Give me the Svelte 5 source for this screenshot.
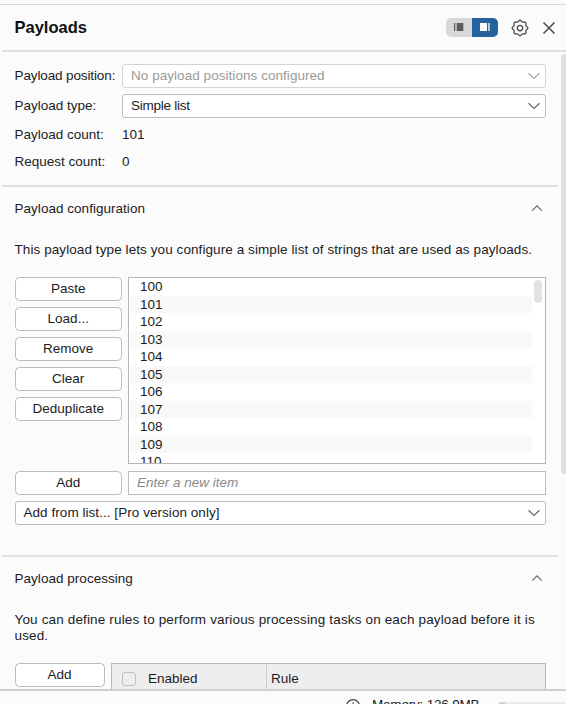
<script>
  const items = Array.from({ length: 11 }, (_, i) => 100 + i);
  const actions = ['Paste', 'Load...', 'Remove', 'Clear', 'Deduplicate'];
</script>

{#snippet chevron(up)}
  <svg class="chevron" width="14" height="10" viewBox="0 0 14 10">
    {#if up}
      <path d="M2.2 7.6 L7 2.8 L11.8 7.6" />
    {:else}
      <path d="M1.5 2.2 L7 7.4 L12.5 2.2" />
    {/if}
  </svg>
{/snippet}

<div class="app">
  <header>
    <h1>Payloads</h1>
    <div class="toggle">
      <span class="side">
        <svg width="12" height="10" viewBox="0 0 12 10"><path d="M1 1h1.3v8H1zM3.7 1h6.6v8H3.7z" /></svg>
      </span>
      <span class="side on">
        <svg width="12" height="10" viewBox="0 0 12 10"><path d="M1 1h7v8H1zM9.3 1h1.3v8H9.3z" /></svg>
      </span>
    </div>
    <svg class="gear" width="18" height="18" viewBox="0 0 18 18">
      <path d="M9 1.2 C10.5 1.2 10.4 2.9 11.5 3.2 C12.6 3.3 13.5 2.3 14.5 3.5 C15.7 4.5 14.7 5.4 14.8 6.5 C15.1 7.6 16.8 7.5 16.8 9 C16.8 10.5 15.1 10.4 14.8 11.5 C14.7 12.6 15.7 13.5 14.5 14.5 C13.5 15.7 12.6 14.7 11.5 14.8 C10.4 15.1 10.5 16.8 9 16.8 C7.5 16.8 7.6 15.1 6.5 14.8 C5.4 14.7 4.5 15.7 3.5 14.5 C2.3 13.5 3.3 12.6 3.2 11.5 C2.9 10.4 1.2 10.5 1.2 9 C1.2 7.5 2.9 7.6 3.2 6.5 C3.3 5.4 2.3 4.5 3.5 3.5 C4.5 2.3 5.4 3.3 6.5 3.2 C7.6 2.9 7.5 1.2 9 1.2 Z" />
      <circle cx="9" cy="9" r="2.7" />
    </svg>
    <svg class="close" width="14" height="14" viewBox="0 0 14 14"><path d="M1.5 1.5 L12.5 12.5 M12.5 1.5 L1.5 12.5" /></svg>
  </header>
  <hr />

  <main>
    <div class="content">
      <section class="fields">
        <div class="field"><span class="tight">Payload position:</span><div class="select disabled">No payload positions configured{@render chevron(false)}</div></div>
        <div class="field"><span>Payload type:</span><div class="select tight">Simple list{@render chevron(false)}</div></div>
        <div class="field count"><span>Payload count:</span><b>101</b></div>
        <div class="field count"><span>Request count:</span><b>0</b></div>
      </section>

      <section class="config">
        <div class="title"><span>Payload configuration</span>{@render chevron(true)}</div>
        <p>This payload type lets you configure a simple list of strings that are used as payloads.</p>
        <div class="editor">
          <div class="buttons">
            {#each actions as action}
              <button>{action}</button>
            {/each}
          </div>
          <div class="list">
            <div class="rows">
              {#each items as item}
                <div class="row">{item}</div>
              {/each}
            </div>
            <i class="thumb"></i>
          </div>
        </div>
        <div class="add">
          <button>Add</button>
          <div class="input">Enter a new item</div>
        </div>
        <div class="select wide">Add from list... [Pro version only]{@render chevron(false)}</div>
      </section>

      <section class="processing">
        <div class="title"><span>Payload processing</span>{@render chevron(true)}</div>
        <p>You can define rules to perform various processing tasks on each payload before it is<br />used.</p>
        <div class="rules">
          <button>Add</button>
          <div class="thead">
            <div class="enabled"><i class="check"></i>Enabled</div>
            <div class="rule">Rule</div>
          </div>
        </div>
      </section>
    </div>
    <div class="scroll"><i></i></div>
  </main>

  <footer>
    <svg width="16" height="16" viewBox="0 0 16 16"><circle cx="8" cy="8" r="6.4" /><path d="M8 4.2v1.5M8 7v5" /></svg>
    <span>Memory: 126.9MB</span>
    <i class="meter"></i>
  </footer>
</div>

<style>
  .app {
    width: 566px;
    height: 704px;
    overflow: hidden;
    display: flex;
    flex-direction: column;
    box-sizing: border-box;
    padding-top: 4px;
    background: #fbfbfb;
    color: #1c1c1e;
    font: 13.5px/16px "Liberation Sans", Arial, sans-serif;
    white-space: nowrap;
  }
  .app * { box-sizing: border-box; }
  header {
    height: 46px;
    flex: none;
    display: flex;
    align-items: center;
    padding: 0 10px 0 14.5px;
    border-top: 1px solid #d5d8d8;
  }
  hr { flex: none; width: 564px; height: 2px; margin: 0 0 0 2px; border: 0; background: #dfdfdf; }
  h1 {
    flex: 1;
    margin: -1px 0 0;
    font-size: 16.5px;
    line-height: 20px;
    font-weight: bold;
    color: #111;
  }
  .toggle {
    display: flex;
    width: 52px;
    height: 19px;
    border-radius: 5px;
    overflow: hidden;
    margin: -1px 12.5px 0 0;
  }
  .side {
    flex: 1;
    display: flex;
    align-items: center;
    justify-content: center;
    background: #d8d8d8;
    fill: #5c5c5c;
  }
  .on { background: #25639e; fill: #fff; }
  .gear, .close { fill: none; stroke: #505050; stroke-width: 1.35; stroke-linejoin: round; }
  .gear { margin-right: 13.5px; }
  .close { stroke-width: 1.6; }

  main { flex: none; height: 637px; display: flex; overflow: hidden; }
  .content { width: 558px; padding-left: 2px; }
  section { padding: 0 12px 0 12.5px; }
  .fields { height: 133px; padding-top: 12px; }
  .field { display: flex; align-items: center; height: 24px; margin-bottom: 6px; }
  .field > span { width: 107.5px; }
  .tight { letter-spacing: -0.12px; }
  .wide { letter-spacing: 0.05px; }
  .field.count { height: 16px; margin: 9px 0 12px; }
  .field.count + .count { margin-top: -1px; }
  .field b { font-weight: normal; }
  .field .select { flex: 1; }
  .select {
    height: 24px;
    display: flex;
    align-items: center;
    justify-content: space-between;
    padding: 0 4px 0 8px;
    border: 1px solid #bfbaba;
    border-radius: 3px;
    background: #fff;
  }
  .select.tight { letter-spacing: -0.25px; }
  .disabled { color: #9a9a9a; border-color: #d4d4d4; letter-spacing: 0.05px; }
  .disabled .chevron { stroke: #aaa; }
  .chevron { fill: none; stroke: #6b6b6b; stroke-width: 1.3; }

  .config, .processing { border-top: 2px solid #e0e0e0; }
  .config { height: 370px; }
  .title { display: flex; align-items: center; justify-content: space-between; height: 42px; padding-right: 2px; }
  .title span { letter-spacing: 0.03px; margin-top: 1px; }
  p { margin: 0; height: 50px; padding-top: 13px; letter-spacing: 0.083px; }
  button {
    display: block;
    width: 107.5px;
    height: 24px;
    padding: 0;
    border: 1px solid #bfbaba;
    border-radius: 4.5px;
    background: #fff;
    color: inherit;
    font: inherit;
  }
  .editor { display: flex; justify-content: space-between; margin-top: -2px; height: 187px; }
  .buttons { display: flex; flex-direction: column; gap: 6px; }
  .list { width: 418px; border: 1px solid #bab5b5; background: #fff; position: relative; overflow: hidden; }
  .rows { width: 403px; padding-left: 1px; }
  .row { height: 17.5px; line-height: 18.5px; padding-left: 10px; }
  .row:nth-child(even) { background: #f9f9f9; }
  .thumb { position: absolute; right: 3px; top: 2px; width: 8px; height: 23px; border-radius: 4px; background: #e3e3e3; }
  .add { display: flex; justify-content: space-between; margin: 7px 0 6px; }
  .input { width: 418px; height: 24px; border: 1px solid #bfbaba; background: #fff; color: #8a8a8a; font-style: italic; padding: 3px 8px; }

  .processing p { height: 64px; letter-spacing: 0.15px; }
  .rules { display: flex; justify-content: space-between; }
  .rules button { width: 90px; }
  .thead { display: flex; width: 435px; height: 40px; background: #eee; border: 1px solid #bab5b5; }
  .enabled { width: 155px; height: 29px; display: flex; align-items: center; padding-left: 10px; border-right: 1px solid #ccc; }
  .check { width: 14px; height: 14px; border: 1px solid #c2bebe; border-radius: 3px; margin-right: 12px; }
  .rule { height: 29px; line-height: 29px; padding-left: 4px; }
  .scroll { width: 8px; padding: 2px 0 0 3px; }
  .scroll i { display: block; width: 7px; height: 420px; border-radius: 3px 0 0 3px; background: #e0e0e0; }

  footer {
    flex: none;
    height: 15px;
    border-top: 2px solid #d2cece;
    display: flex;
    align-items: flex-start;
    padding: 7px 0 0 345px;
    overflow: hidden;
    letter-spacing: -0.2px;
  }
  footer span { margin-top: -1px; }
  footer svg { flex: none; fill: none; stroke: #444; stroke-width: 1.2; margin-right: 11px; }
  .meter { flex: none; width: 90px; height: 8px; margin: 4px 0 0 19px; border-radius: 4px; background: linear-gradient(90deg, #d0d0d0 7px, #e9e9e9 7px); }
</style>
